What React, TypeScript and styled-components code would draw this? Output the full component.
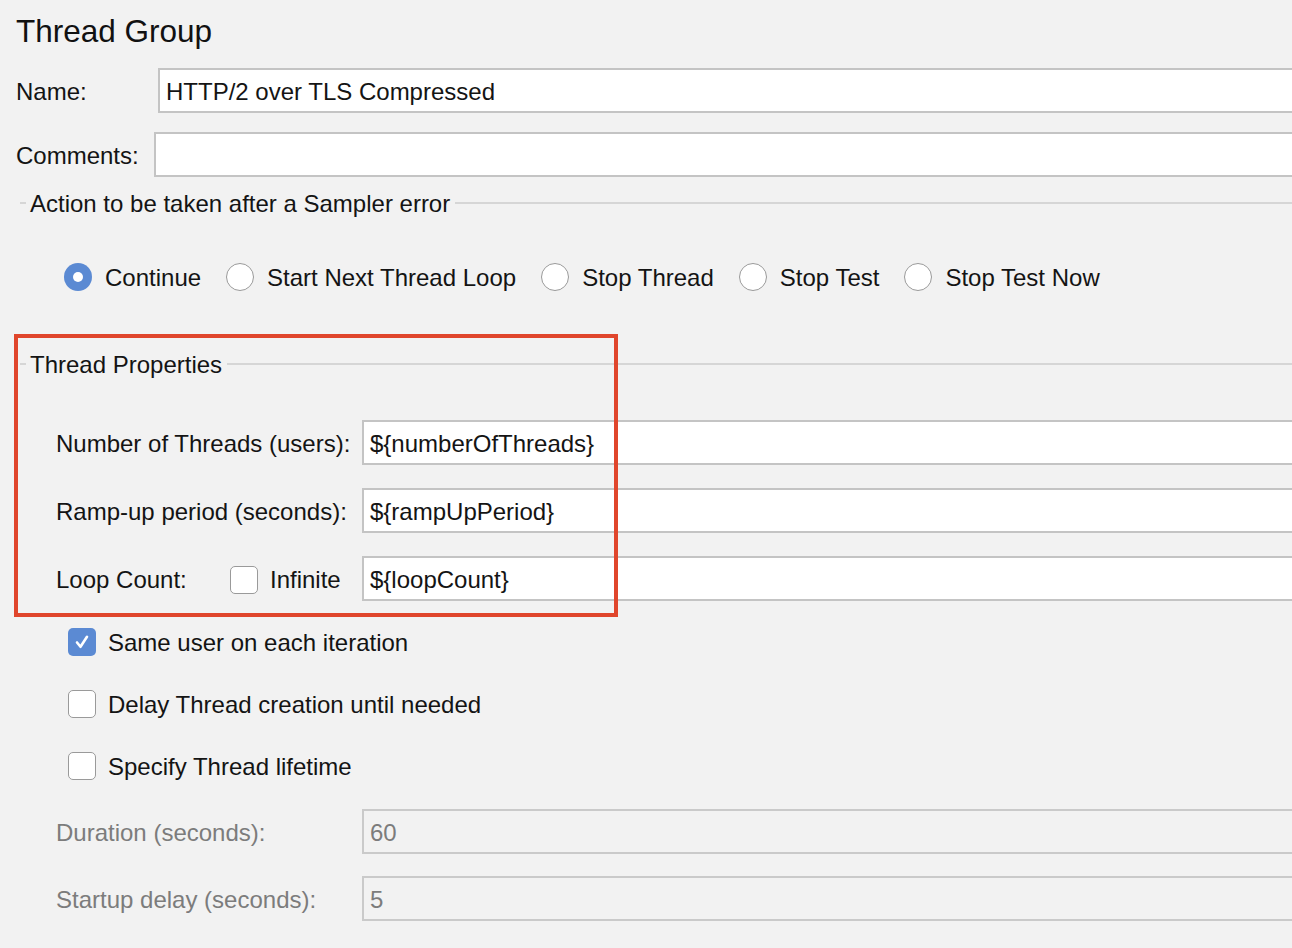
import React from "react"
import styled, { createGlobalStyle } from "styled-components"

const GlobalStyle = createGlobalStyle`
  html, body {
    margin: 0;
    padding: 0;
    background: #f2f2f2;
    overflow: hidden;
  }
  body {
    font-family: "Liberation Sans", Arial, sans-serif;
    color: #141414;
  }
`

type Field = {
  label: string
  value: string
}

const threadFields: Field[] = [
  { label: "Number of Threads (users):", value: "${numberOfThreads}" },
  { label: "Ramp-up period (seconds):", value: "${rampUpPeriod}" },
]

const errorActions = [
  "Continue",
  "Start Next Thread Loop",
  "Stop Thread",
  "Stop Test",
  "Stop Test Now",
]

const options = [
  { label: "Same user on each iteration", checked: true },
  { label: "Delay Thread creation until needed", checked: false },
  { label: "Specify Thread lifetime", checked: false },
]

function Check({ checked }: { checked: boolean }) {
  return (
    <CheckBox $checked={checked}>
      {checked && (
        <svg width="18" height="18" viewBox="0 0 18 18">
          <path
            d="M4 9.5 L7.5 13.8 L14 3.8"
            fill="none"
            stroke="#fff"
            strokeWidth="2.6"
            strokeLinecap="round"
            strokeLinejoin="round"
          />
        </svg>
      )}
    </CheckBox>
  )
}

function Legend({ title, top }: { title: string; top: number }) {
  return (
    <LegendRow $top={top}>
      <LegendDash />
      <LegendText>{title}</LegendText>
      <LegendLine />
    </LegendRow>
  )
}

function App() {
  return (
    <Page>
      <GlobalStyle />
      <Title>Thread Group</Title>

      <TopRow $top={19}>
        <TopLabel $width={142}>Name:</TopLabel>
        <TextField>HTTP/2 over TLS Compressed</TextField>
      </TopRow>
      <TopRow $top={19}>
        <TopLabel $width={138}>Comments:</TopLabel>
        <TextField />
      </TopRow>

      <Legend title="Action to be taken after a Sampler error" top={13} />

      <RadioGroup>
        {errorActions.map((action, i) => (
          <RadioItem key={action}>
            <Radio $selected={i === 0} />
            <span>{action}</span>
          </RadioItem>
        ))}
      </RadioGroup>

      <Highlighted>
        <Legend title="Thread Properties" top={0} />

        <PropRows>
          {threadFields.map((f) => (
            <PropRow key={f.label}>
              <PropLabel>{f.label}</PropLabel>
              <TextField>{f.value}</TextField>
            </PropRow>
          ))}
          <PropRow>
            <PropLabel>
              <LoopLabel>Loop Count:</LoopLabel>
              <Check checked={false} />
              <InfiniteText>Infinite</InfiniteText>
            </PropLabel>
            <TextField>{"${loopCount}"}</TextField>
          </PropRow>
        </PropRows>

        <RedFrame />
      </Highlighted>

      <Options>
        {options.map((o) => (
          <OptionRow key={o.label}>
            <Check checked={o.checked} />
            <span>{o.label}</span>
          </OptionRow>
        ))}
      </Options>

      <DisabledRows>
        <PropRow>
          <PropLabel $disabled>Duration (seconds):</PropLabel>
          <TextField $disabled>60</TextField>
        </PropRow>
        <PropRow>
          <PropLabel $disabled>Startup delay (seconds):</PropLabel>
          <TextField $disabled>5</TextField>
        </PropRow>
      </DisabledRows>
    </Page>
  )
}

export default App

const Page = styled.div`
  padding: 14px 0 0 16px;
  font-size: 24px;
  overflow: hidden;
  width: 1292px;
  height: 948px;
  box-sizing: border-box;
`

const Title = styled.div`
  font-size: 31.5px;
  line-height: 35px;
  color: #111;
`

const TopRow = styled.div<{ $top: number }>`
  display: flex;
  align-items: center;
  margin-top: ${(p) => p.$top}px;
  height: 45px;
`

const TopLabel = styled.div<{ $width: number }>`
  width: ${(p) => p.$width}px;
  flex-shrink: 0;
  padding-top: 2px;
`

const TextField = styled.div<{ $disabled?: boolean }>`
  flex: 1;
  height: 45px;
  box-sizing: border-box;
  margin-right: -20px;
  border: 2px solid ${(p) => (p.$disabled ? "#cacaca" : "#c4c4c4")};
  background: ${(p) => (p.$disabled ? "#f2f2f2" : "#ffffff")};
  color: ${(p) => (p.$disabled ? "#7c7c7c" : "#141414")};
  padding: 2px 6px 0;
  display: flex;
  align-items: center;
  white-space: nowrap;
`

const LegendRow = styled.div<{ $top: number }>`
  display: flex;
  align-items: center;
  height: 26px;
  margin-top: ${(p) => p.$top}px;
  padding-left: 4px;
`

const LegendDash = styled.div`
  width: 6px;
  height: 2px;
  background: #d6d6d6;
`

const LegendText = styled.span`
  padding: 2px 5px 0 4px;
  white-space: nowrap;
`

const LegendLine = styled.div`
  flex: 1;
  height: 2px;
  background: #d6d6d6;
`

const RadioGroup = styled.div`
  display: flex;
  align-items: center;
  gap: 25px;
  height: 30px;
  margin-top: 46px;
  padding-left: 48px;
`

const RadioItem = styled.label`
  display: flex;
  align-items: center;
  gap: 13px;
  white-space: nowrap;

  span {
    padding-top: 2px;
  }
`

const Radio = styled.span<{ $selected: boolean }>`
  width: 28px;
  height: 28px;
  box-sizing: border-box;
  border-radius: 50%;
  flex-shrink: 0;
  position: relative;
  background: ${(p) => (p.$selected ? "#5b8ad3" : "#ffffff")};
  border: ${(p) => (p.$selected ? "none" : "1.5px solid #9a9a9a")};

  &::after {
    content: "";
    display: ${(p) => (p.$selected ? "block" : "none")};
    position: absolute;
    left: 50%;
    top: 50%;
    width: 10px;
    height: 10px;
    margin: -5px 0 0 -5px;
    border-radius: 50%;
    background: #fff;
  }
`

const Highlighted = styled.div`
  position: relative;
  margin-top: 59px;
`

const RedFrame = styled.div`
  position: absolute;
  left: -2px;
  top: -17px;
  width: 604px;
  height: 283px;
  box-sizing: border-box;
  border: 4px solid #e0462c;
  pointer-events: none;
`

const PropRows = styled.div`
  display: flex;
  flex-direction: column;
  gap: 23px;
  margin-top: 43px;
  padding-left: 40px;
`

const PropRow = styled.div`
  display: flex;
  align-items: center;
`

const PropLabel = styled.div<{ $disabled?: boolean }>`
  width: 306px;
  flex-shrink: 0;
  display: flex;
  align-items: center;
  white-space: nowrap;
  padding-top: 2px;
  color: ${(p) => (p.$disabled ? "#7c7c7c" : "inherit")};
`

const LoopLabel = styled.span`
  width: 174px;
`

const InfiniteText = styled.span`
  margin-left: 12px;
`

const CheckBox = styled.span<{ $checked: boolean }>`
  width: 28px;
  height: 28px;
  box-sizing: border-box;
  border-radius: 5px;
  flex-shrink: 0;
  display: inline-flex;
  align-items: center;
  justify-content: center;
  background: ${(p) => (p.$checked ? "#5b8ad3" : "#ffffff")};
  border: ${(p) => (p.$checked ? "none" : "1.5px solid #9a9a9a")};
`

const Options = styled.div`
  display: flex;
  flex-direction: column;
  gap: 32px;
  margin-top: 26px;
  padding-left: 52px;
`

const OptionRow = styled.label`
  display: flex;
  align-items: center;
  gap: 12px;
  height: 30px;

  span:last-child {
    padding-top: 2px;
  }
`

const DisabledRows = styled.div`
  display: flex;
  flex-direction: column;
  gap: 22px;
  margin-top: 28px;
  padding-left: 40px;
`
